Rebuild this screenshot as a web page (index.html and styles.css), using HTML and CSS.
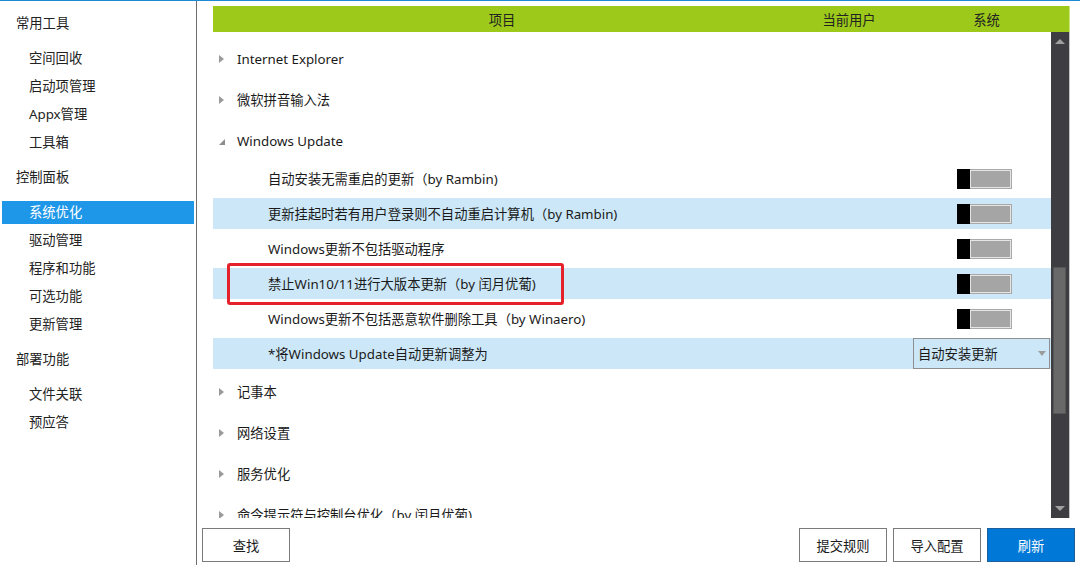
FILE: index.html
```html
<!DOCTYPE html>
<html lang="zh-CN">
<head>
<meta charset="utf-8">
<title>系统优化</title>
<link rel="stylesheet" href="styles.css">
</head>
<body>
<div class="topline"></div>
<div class="app">
  <aside class="sidebar">
    <div class="group">常用工具</div>
    <div class="item">空间回收</div>
    <div class="item">启动项管理</div>
    <div class="item">Appx管理</div>
    <div class="item">工具箱</div>
    <div class="group">控制面板</div>
    <div class="item active">系统优化</div>
    <div class="item">驱动管理</div>
    <div class="item">程序和功能</div>
    <div class="item">可选功能</div>
    <div class="item">更新管理</div>
    <div class="group">部署功能</div>
    <div class="item">文件关联</div>
    <div class="item">预应答</div>
  </aside>
  <main class="main">
    <div class="table">
      <div class="thead">
        <span class="col-item">项目</span>
        <span class="col-user">当前用户</span>
        <span class="col-sys">系统</span>
      </div>
      <div class="tbody">
        <div class="list">
          <div class="row"><span class="tri"></span><span>Internet Explorer</span></div>
          <div class="row"><span class="tri"></span><span>微软拼音输入法</span></div>
          <div class="row"><span class="tri open"></span><span>Windows Update</span></div>
          <div class="sub"><div class="sub-in"><span class="label">自动安装无需重启的更新（by Rambin)</span><span class="toggle"><span class="knob"></span><span class="track"></span></span></div></div>
          <div class="sub"><div class="sub-in hl"><span class="label">更新挂起时若有用户登录则不自动重启计算机（by Rambin)</span><span class="toggle"><span class="knob"></span><span class="track"></span></span></div></div>
          <div class="sub"><div class="sub-in"><span class="label">Windows更新不包括驱动程序</span><span class="toggle"><span class="knob"></span><span class="track"></span></span></div></div>
          <div class="sub"><div class="sub-in hl"><span class="label">禁止Win10/11进行大版本更新（by 闰月优葡)</span><span class="toggle"><span class="knob"></span><span class="track"></span></span><span class="mark"></span></div></div>
          <div class="sub"><div class="sub-in"><span class="label">Windows更新不包括恶意软件删除工具（by Winaero)</span><span class="toggle"><span class="knob"></span><span class="track"></span></span></div></div>
          <div class="sub"><div class="sub-in hl"><span class="label">*将Windows Update自动更新调整为</span><span class="select"><span>自动安装更新</span><span class="caret"></span></span></div></div>
          <div class="row"><span class="tri"></span><span>记事本</span></div>
          <div class="row"><span class="tri"></span><span>网络设置</span></div>
          <div class="row"><span class="tri"></span><span>服务优化</span></div>
          <div class="row"><span class="tri"></span><span>命令提示符与控制台优化（by 闰月优葡)</span></div>
        </div>
        <div class="scrollbar">
          <span class="arrow up"></span>
          <div class="sb-track"><div class="thumb"></div></div>
          <span class="arrow down"></span>
        </div>
      </div>
    </div>
    <div class="actions">
      <button class="btn">查找</button>
      <div class="spacer"></div>
      <button class="btn">提交规则</button>
      <button class="btn">导入配置</button>
      <button class="btn primary">刷新</button>
    </div>
  </main>
</div>
</body>
</html>
```

FILE: styles.css
```css
* { box-sizing: border-box; }
html, body { margin: 0; padding: 0; }
body {
  width: 1080px;
  height: 565px;
  overflow: hidden;
  background: #fff;
  color: #1a1a1a;
  font-family: "Segoe UI", "Noto Sans", "Noto Sans CJK SC", sans-serif;
  font-size: 13.3px;
}
.topline { height: 1px; background: #1f88d6; }
.app { display: flex; height: 564px; }

.sidebar {
  width: 197px;
  border-right: 1px solid #6e6e6e;
  display: flex;
  flex-direction: column;
  padding-top: 8px;
}
.group {
  height: 28px;
  line-height: 28px;
  padding-left: 16px;
  margin: 7px 0 7px;
  color: #222;
}
.group:first-child { margin-top: 0; }
.item {
  height: 23px;
  line-height: 23px;
  margin: 2.5px 2px;
  padding-left: 27px;
  color: #222;
}
.item.active { background: #1f97e8; color: #fff; }

.main {
  flex: 1;
  display: flex;
  flex-direction: column;
  padding: 5px 5px 0 5px;
}
.table {
  margin: 0 5px 0 11px;
  display: flex;
  flex-direction: column;
}
.thead {
  height: 26px;
  display: flex;
  align-items: center;
  background: #9cc91a;
  border-right: 1px solid #c9e67a;
  color: #222;
}
.col-item { width: 578px; text-align: center; }
.col-user { width: 116px; text-align: center; }
.col-sys { flex: 1; text-align: center; padding-right: 3px; }

.tbody { height: 486px; display: flex; }
.list {
  flex: 1;
  overflow: hidden;
  display: flex;
  flex-direction: column;
  padding-top: 6px;
}
.row {
  flex: none;
  height: 41px;
  display: flex;
  align-items: center;
  padding-left: 6px;
  white-space: nowrap;
}
.tri {
  width: 0; height: 0;
  border-top: 4.5px solid transparent;
  border-bottom: 4.5px solid transparent;
  border-left: 5px solid #9a9a9a;
  margin-right: 13px;
}
.tri.open {
  border-top: 0;
  border-left: 6px solid transparent;
  border-bottom: 6px solid #8c8c8c;
  margin-right: 12px;
  margin-top: 2px;
}
.sub { flex: none; height: 35px; padding: 2px 0; }
.sub-in {
  position: relative;
  height: 31px;
  display: flex;
  align-items: center;
  padding-left: 55px;
  white-space: nowrap;
}
.sub-in.hl { background: #cce8f8; }
.label { flex: 1; }
.toggle {
  display: flex;
  width: 55px;
  height: 20px;
  margin-right: 39px;
}
.knob { width: 13px; height: 20px; background: #000; }
.track {
  flex: 1;
  background: #a5a5a5;
  border: 1px solid #a9a9a9;
  border-left: 0;
  box-shadow: inset 0 0 0 1px #e4e4e4;
}
.select {
  width: 137px;
  height: 31px;
  margin-right: 1px;
  border: 1px solid #8f8f8f;
  display: flex;
  align-items: center;
  justify-content: space-between;
  padding: 0 3px 0 4px;
}
.caret {
  width: 0; height: 0;
  border-left: 4.5px solid transparent;
  border-right: 4.5px solid transparent;
  border-top: 5px solid #9c9c9c;
}
.mark {
  position: absolute;
  left: 14px;
  top: -5px;
  width: 337px;
  height: 42px;
  border: 3px solid #e5222b;
  border-radius: 3px;
}

.scrollbar {
  width: 19px;
  background: #3e3d42;
  border-right: 1px solid #c4c4c4;
  display: flex;
  flex-direction: column;
  align-items: center;
}
.arrow { width: 0; height: 0; border-left: 5px solid transparent; border-right: 5px solid transparent; }
.arrow.up { border-bottom: 5px solid #a0a0a0; margin-top: 7px; }
.arrow.down { border-top: 5px solid #a0a0a0; margin-bottom: 7px; }
.sb-track { flex: 1; width: 100%; padding-top: 223px; }
.thumb {
  width: 13px;
  height: 147px;
  margin-left: 2px;
  background: #696969;
  border: 1px solid #555;
}

.actions {
  margin-top: 10px;
  display: flex;
  gap: 6px;
}
.spacer { flex: 1; }
.btn {
  width: 88px;
  height: 34px;
  background: #fff;
  border: 1px solid #7a7a7a;
  font-family: inherit;
  font-size: 13.3px;
  color: #1a1a1a;
  padding: 0;
}
.btn.primary { background: #0078d7; border-color: #1d5f9a; color: #fff; }
```
